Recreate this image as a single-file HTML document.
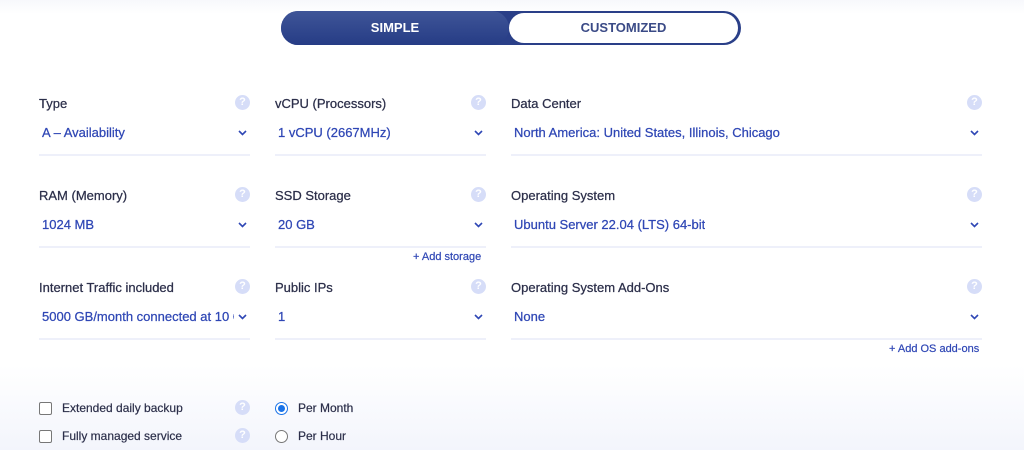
<!DOCTYPE html><html><head><style>
body{margin:0;width:1024px;height:450px;overflow:hidden;font-family:"Liberation Sans",sans-serif;background:linear-gradient(#f7f8fc 0,#fff 14px,#fff 365px,#f3f5fc 450px);position:relative}
.tog{position:absolute;left:281px;top:11px;width:460px;height:34px;border-radius:18px;background:#2a3f88;box-sizing:border-box}
.tog .a{position:absolute;left:0;top:0;width:228px;height:34px;border-radius:17px;background:linear-gradient(#3f5598,#263c85);color:#fff;font-weight:bold;font-size:13px;text-align:center;line-height:34px}
.tog .b{position:absolute;left:228px;top:2px;width:229px;height:30px;border-radius:15px;background:#fff;color:#3a4a86;font-weight:bold;font-size:13px;text-align:center;line-height:30px}
.f{position:absolute;border-bottom:2px solid #eef0fa;height:62px}
.l{position:absolute;left:0;top:4px;font-size:13px;color:#2c2f4a;-webkit-text-stroke:0.25px #2c2f4a}
.v{position:absolute;left:3px;top:33px;font-size:13px;color:#2f47b5;white-space:nowrap;overflow:hidden;-webkit-text-stroke:0.25px #2f47b5}
.q{position:absolute;right:0;top:3px;width:15px;height:15px;border-radius:50%;background:#d6ddf8;color:#fff;font-size:11px;font-weight:bold;text-align:center;line-height:15px}
.c{position:absolute;right:3px;top:38px;width:9px;height:6px}
.add{position:absolute;font-size:11px;color:#2f47b5;-webkit-text-stroke:0.2px #2f47b5}
.cb{position:absolute;width:11px;height:11px;border:1px solid #777;border-radius:2px;background:#fff}
.t{position:absolute;font-size:12px;color:#2c2f4a;-webkit-text-stroke:0.2px #2c2f4a}
.r{position:absolute;width:11px;height:11px;border:1px solid #777;border-radius:50%;background:#fff}
</style></head><body>
<div class="tog"><div class="a">SIMPLE</div><div class="b">CUSTOMIZED</div></div>
<svg width="0" height="0" style="position:absolute"><defs><symbol id="ch" viewBox="0 0 9 6"><path d="M1 1L4.5 4.5L8 1" fill="none" stroke="#2f47b5" stroke-width="1.6"/></symbol></defs></svg>

<div class="f" style="left:39px;top:92px;width:211px"><div class="l">Type</div><div class="q">?</div><div class="v">A – Availability</div><svg class="c"><use href="#ch"/></svg></div>
<div class="f" style="left:275px;top:92px;width:211px"><div class="l">vCPU (Processors)</div><div class="q">?</div><div class="v">1 vCPU (2667MHz)</div><svg class="c"><use href="#ch"/></svg></div>
<div class="f" style="left:511px;top:92px;width:471px"><div class="l">Data Center</div><div class="q">?</div><div class="v">North America: United States, Illinois, Chicago</div><svg class="c"><use href="#ch"/></svg></div>

<div class="f" style="left:39px;top:184px;width:211px"><div class="l">RAM (Memory)</div><div class="q">?</div><div class="v">1024 MB</div><svg class="c"><use href="#ch"/></svg></div>
<div class="f" style="left:275px;top:184px;width:211px"><div class="l">SSD Storage</div><div class="q">?</div><div class="v">20 GB</div><svg class="c"><use href="#ch"/></svg></div>
<div class="f" style="left:511px;top:184px;width:471px"><div class="l">Operating System</div><div class="q">?</div><div class="v">Ubuntu Server 22.04 (LTS) 64-bit</div><svg class="c"><use href="#ch"/></svg></div>
<div class="add" style="left:413px;top:251px">+ Add storage</div>

<div class="f" style="left:39px;top:276px;width:211px"><div class="l">Internet Traffic included</div><div class="q">?</div><div class="v" style="width:192px">5000 GB/month connected at 10 Gbps</div><svg class="c"><use href="#ch"/></svg></div>
<div class="f" style="left:275px;top:276px;width:211px"><div class="l">Public IPs</div><div class="q">?</div><div class="v">1</div><svg class="c"><use href="#ch"/></svg></div>
<div class="f" style="left:511px;top:276px;width:471px"><div class="l">Operating System Add-Ons</div><div class="q">?</div><div class="v">None</div><svg class="c"><use href="#ch"/></svg></div>
<div class="add" style="left:889px;top:343px">+ Add OS add-ons</div>

<div class="cb" style="left:39px;top:402px"></div><div class="t" style="left:62px;top:401px">Extended daily backup</div>
<div class="q" style="left:235px;top:400px;right:auto">?</div>
<div class="cb" style="left:39px;top:430px"></div><div class="t" style="left:62px;top:429px">Fully managed service</div>
<div class="q" style="left:235px;top:428px;right:auto">?</div>
<div class="r" style="left:275px;top:402px;border-color:#1a73e8"><div style="position:absolute;left:2px;top:2px;width:7px;height:7px;border-radius:50%;background:#1a73e8"></div></div>
<div class="t" style="left:298px;top:401px">Per Month</div>
<div class="r" style="left:275px;top:430px"></div>
<div class="t" style="left:298px;top:429px">Per Hour</div>
</body></html>
